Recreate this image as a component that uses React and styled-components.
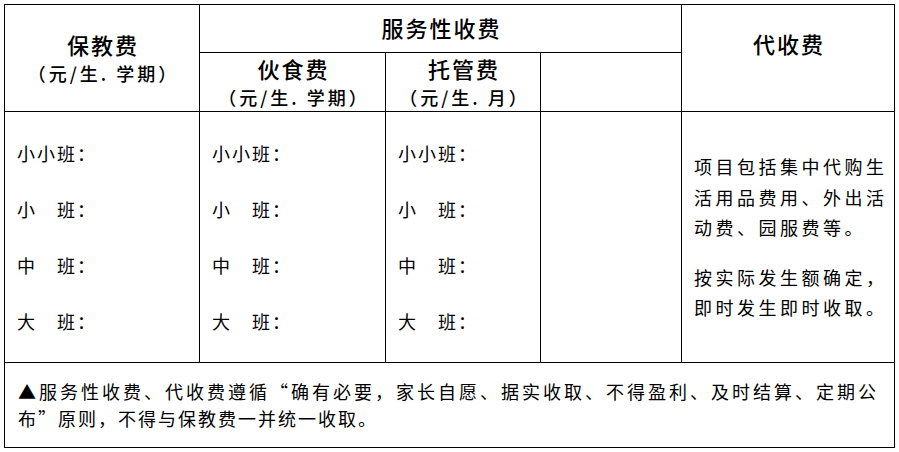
import React from 'react';
import styled, { createGlobalStyle } from 'styled-components';

const GlobalStyle = createGlobalStyle`
  html, body {
    margin: 0;
    padding: 0;
    background: #fff;
  }
  body {
    font-family: "Noto Sans CJK SC", "Liberation Sans", sans-serif;
    color: #000;
  }
`;

const Table = styled.table`
  margin: 4px 0 0 4px;
  width: 891px;
  table-layout: fixed;
  border-collapse: collapse;
  font-family: "Noto Sans CJK SC", sans-serif;
`;

const Row = styled.tr`
  height: ${(p) => p.h}px;
`;

const Cell = styled.td`
  border: 1px solid #000;
  padding: 0;
  text-align: center;
  vertical-align: ${(p) => p.valign || 'middle'};
  ${(p) => p.pad && `padding: ${p.pad};`}
`;

const Title = styled.div`
  font-size: 22px;
  font-weight: 500;
  letter-spacing: 2px;
  line-height: 30px;
  padding-left: 2px;
`;

const Unit = styled.div`
  font-size: 18px;
  font-weight: 500;
  letter-spacing: 3px;
  line-height: 28px;
  padding-left: 3px;
`;

const Grades = styled.div`
  text-align: left;
  padding: 13px 0 11px 12px;
  font-size: 18px;
  letter-spacing: 2px;
  line-height: 56px;
`;

const Note = styled.div`
  text-align: left;
  padding-left: 12px;
  font-size: 18px;
  letter-spacing: 3.5px;
  line-height: 30.5px;
  white-space: nowrap;
  & + & {
    margin-top: 19px;
  }
`;

const Line = styled.div`
  white-space: nowrap;
`;

const Footer = styled.div`
  text-align: left;
  padding: 0 18px 0 13px;
  font-size: 18px;
  letter-spacing: 2px;
  line-height: 27px;
`;

const FooterLine = styled.div`
  white-space: nowrap;
  ${(p) => p.justify && `
    text-align: justify;
    text-align-last: justify;
    letter-spacing: 0;
  `}
`;

const grades = ['小小班：', '小\u3000班：', '中\u3000班：', '大\u3000班：'];

const GradeList = () => (
  <Grades>
    {grades.map((g) => (
      <Line key={g}>{g}</Line>
    ))}
  </Grades>
);

export default function App() {
  return (
    <>
      <GlobalStyle />
      <Table>
        <colgroup>
          <col style={{ width: 195 }} />
          <col style={{ width: 186 }} />
          <col style={{ width: 155 }} />
          <col style={{ width: 141 }} />
          <col style={{ width: 213 }} />
        </colgroup>
        <tbody>
          <Row h={48}>
            <Cell rowSpan={2}>
              <Title>保教费</Title>
              <Unit>（元/生. 学期）</Unit>
            </Cell>
            <Cell colSpan={3} pad="0 0 3px 0">
              <Title>服务性收费</Title>
            </Cell>
            <Cell rowSpan={2} valign="top" pad="23px 0 0 0">
              <Title>代收费</Title>
            </Cell>
          </Row>
          <Row h={58}>
            <Cell>
              <Title>伙食费</Title>
              <Unit>（元/生. 学期）</Unit>
            </Cell>
            <Cell>
              <Title>托管费</Title>
              <Unit>（元/生. 月）</Unit>
            </Cell>
            <Cell />
          </Row>
          <Row h={251}>
            <Cell valign="top">
              <GradeList />
            </Cell>
            <Cell valign="top">
              <GradeList />
            </Cell>
            <Cell valign="top">
              <GradeList />
            </Cell>
            <Cell />
            <Cell>
              <Note>
                <Line>项目包括集中代购生</Line>
                <Line>活用品费用、外出活</Line>
                <Line>动费、园服费等。</Line>
              </Note>
              <Note>
                <Line>按实际发生额确定，</Line>
                <Line>即时发生即时收取。</Line>
              </Note>
            </Cell>
          </Row>
          <Row h={85}>
            <Cell colSpan={5}>
              <Footer>
                <FooterLine justify>
                  ▲服务性收费、代收费遵循“确有必要，家长自愿、据实收取、不得盈利、及时结算、定期公
                </FooterLine>
                <FooterLine>布”原则，不得与保教费一并统一收取。</FooterLine>
              </Footer>
            </Cell>
          </Row>
        </tbody>
      </Table>
    </>
  );
}
